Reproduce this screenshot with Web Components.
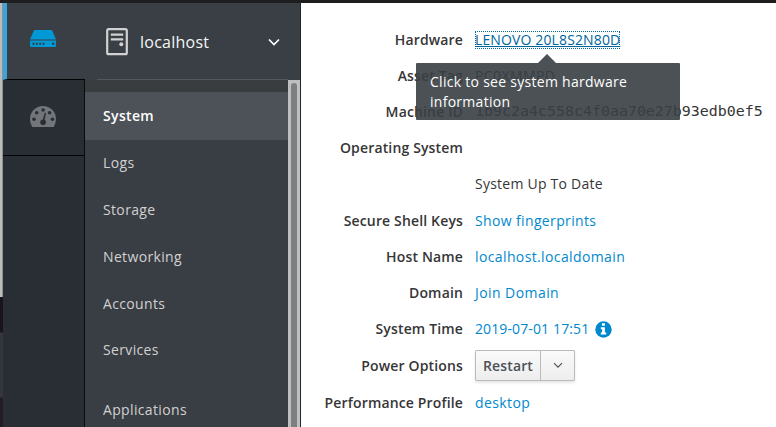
<!DOCTYPE html>
<html lang="en">
<head>
<meta charset="utf-8">
<title>System</title>
<style>
html, body { margin: 0; height: 100%; overflow: hidden; background: #fff; }
body { font: 14px/20px "Open Sans", sans-serif; color: #363636; }
</style>
</head>
<body>
<cockpit-shell></cockpit-shell>
<script>
const define = (name, html, init) => customElements.define(name, class extends HTMLElement {
  connectedCallback() {
    if (this.shadowRoot) return;
    const t = document.createElement('template');
    t.innerHTML = html;
    this.attachShadow({ mode: 'open' }).append(t.content.cloneNode(true));
    if (init) init(this);
  }
});

define('machine-rail', `
<style>
:host { display: flex; flex-direction: column; width: 81px; background: #292e34; border-right: 1px solid #0a0b0d; }
div { box-sizing: border-box; border-bottom: 1px solid #030303; display: flex; justify-content: center; align-items: center; }
.on { height: 77px; background: #393f44; border-left: 4px solid #39a5dc; margin-right: -1px; padding: 0 6px 6px 0; }
.off { height: 76px; padding: 0 1px 3px 0; }
svg { display: block; }
</style>
<div class="on"><svg width="26" height="18" viewBox="0 0 26 18"><path fill="#0099d6" d="M5 1h16q1 0 1.400 1L26 10.500H0L3.600 2Q4 1 5 1ZM0 11.500h26V17q0 .9-.9.900H.9Q0 17.900 0 17Z"/><path fill="#393f44" d="M2.500 13.700h2v2h-2zM5.800 13.700h2v2h-2zM9.200 13.700h2v2h-2zM12.600 13.700h2v2h-2zM22 13.700h2.400v2H22z"/></svg></div>
<div class="off"><svg width="26" height="21" viewBox="0 0 26 21"><path fill="#72767b" d="M2.200 21Q0 17.300 0 13a13 13 0 0 1 26 0q0 4.300-2.200 8Z"/><g fill="#292e34"><circle cx="4" cy="13.300" r="1.800"/><circle cx="6.700" cy="6.800" r="1.800"/><circle cx="13.100" cy="4" r="1.800"/><circle cx="19.600" cy="6.800" r="1.800"/><circle cx="22.500" cy="13.300" r="1.800"/><circle cx="13.100" cy="16.200" r="2.800"/><path d="m12.300 15.500 2.500-8.800 1.300.400-2 8.800Z"/></g></svg></div>`);

define('host-switcher', `
<style>
:host { display: flex; box-sizing: border-box; height: 77px; margin-left: 12px; padding: 1px 8px 0 9px; align-items: center; border-bottom: 1px solid #53585e; color: #f5f5f5; font-size: 16px; letter-spacing: .25px; width: 191px; }
span { flex: 1; margin-left: 12px; }
svg { display: block; }
</style>
<svg width="22" height="28" viewBox="0 0 22 28" fill="none" stroke="#d1d1d1"><rect x="1.200" y="1.200" width="19.600" height="25" rx="1.500" stroke-width="2.200"/><path stroke-width="2.200" d="M4.800 6.700h12.400M4.800 11.400h12.400"/><circle cx="15.300" cy="16.300" r="2" fill="#d1d1d1" stroke="none"/></svg>
<span><slot></slot></span>
<svg width="12" height="8" viewBox="0 0 12 8" fill="none" stroke="#fff" stroke-width="1.700"><path d="m1 1.500 5 5 5-5"/></svg>`);

define('nav-item', `
<style>
:host { display: flex; align-items: center; box-sizing: border-box; height: 46px; margin-bottom: 1px; padding-left: 18px; color: #d1d1d1; letter-spacing: .35px; }
:host([active]) { height: 48px; margin-bottom: 0; background: #4d5258; color: #fff; font-weight: 600; }
:host([tight]) { margin-bottom: 0; }
:host([spaced]) { margin-top: 14px; }
</style><slot></slot>`);

define('system-nav', `
<style>
:host { display: flex; flex-direction: column; width: 216px; box-sizing: border-box; background: #393d44; border-right: 1px solid #202730; }
.top { background: #393f44; }
.body { flex: 1; display: flex; min-height: 0; }
nav { flex: 1; padding-top: 12px; background: linear-gradient(#393d3f 0 12px, #393d44 12px); }
.bar { width: 12px; background: #bec0c0; display: flex; justify-content: center; padding-top: 3px; box-sizing: border-box; }
.thumb { width: 6px; border-radius: 3px 3px 0 0; background: #7c8081; }
</style>
<div class="top"><host-switcher>localhost</host-switcher></div>
<div class="body"><nav>
<nav-item active>System</nav-item><nav-item>Logs</nav-item><nav-item>Storage</nav-item><nav-item>Networking</nav-item><nav-item tight>Accounts</nav-item><nav-item tight>Services</nav-item><nav-item spaced>Applications</nav-item>
</nav><div class="bar"><div class="thumb"></div></div></div>`);

define('info-row', `
<style>
:host { display: grid; grid-template-columns: 162px 1fr; column-gap: 12px; align-items: center; height: 36px; white-space: nowrap; }
:host([gap]) { margin-bottom: 1px; }
b { font-weight: 600; text-align: right; letter-spacing: .15px; }
div { display: flex; align-items: center; letter-spacing: var(--track, 0); }
</style><b></b><div><slot></slot></div>`, el => el.shadowRoot.querySelector('b').textContent = el.getAttribute('label') || '');

define('text-link', `
<style>
:host { color: #0088ce; display: block; letter-spacing: var(--track, 0); }
:host([focused]) { color: #00659c; text-decoration: underline; outline: 1px dotted #00659c; outline-offset: -1px; line-height: 18px; }
</style><slot></slot>`);

define('mono-text', `<style>:host { display: block; margin-bottom: 2px; font: 14.950px/20px "DejaVu Sans Mono", monospace; }</style><slot></slot>`);

define('info-icon', `
<style>:host { display: block; margin-left: 6px; } svg { display: block; }</style>
<svg width="17" height="17" viewBox="0 0 17 17"><circle cx="8.500" cy="8.500" r="8.200" fill="#0088ce"/><path fill="#fff" d="M6.900 2.300h3v2.400h-3zM5.800 6.200h4.100v5.400h1.300v2H5.800v-2h1.300V8.200H5.800z"/></svg>`);

define('split-button', `
<style>
:host { display: flex; box-sizing: border-box; height: 31px; width: 100px; margin-bottom: 1px; border: 1px solid #bbb; border-radius: 1px; background: linear-gradient(#fafafa, #ededed); box-shadow: 0 2px 3px rgba(3,3,3,.1); color: #4d5258; font-weight: 600; letter-spacing: .12px; }
span { width: 64px; display: flex; align-items: center; justify-content: center; border-right: 1px solid #bbb; }
i { flex: 1; display: flex; align-items: center; justify-content: center; }
</style>
<span><slot></slot></span><i><svg width="10" height="7" viewBox="0 0 10 7" fill="none" stroke="#4d5258" stroke-width="1.200"><path d="m1 1.200 4 4 4-4"/></svg></i>`);

define('tool-tip', `
<style>
:host { position: absolute; left: 416px; top: 54px; width: 264px; opacity: .9; color: #fff; letter-spacing: .28px; }
.arrow { width: 18px; height: 9px; margin-left: 122px; background: #393f44; clip-path: polygon(50% 0, 100% 100%, 0 100%); }
.box { box-sizing: border-box; height: 57px; padding: 9px 14px; border-radius: 1px; background: #393f44; }
</style><div class="arrow"></div><div class="box"><slot></slot></div>`);

define('system-info', `
<style>:host { display: block; flex: 1; padding-top: 19px; }</style>
<info-row label="Hardware" style="--track:.13px"><text-link focused>LENOVO 20L8S2N80D</text-link></info-row>
<info-row label="Asset Tag" style="--track:.4px">PC0XMMPD</info-row>
<info-row label="Machine ID"><mono-text>1b9c2a4c558c4f0aa70e27b93edb0ef5</mono-text></info-row>
<info-row label="Operating System"></info-row>
<info-row gap style="--track:.24px">System Up To Date</info-row>
<info-row label="Secure Shell Keys" style="--track:.36px"><text-link>Show fingerprints</text-link></info-row>
<info-row label="Host Name" style="--track:.38px"><text-link>localhost.localdomain</text-link></info-row>
<info-row label="Domain" style="--track:.43px"><text-link>Join Domain</text-link></info-row>
<info-row gap label="System Time" style="--track:.12px"><text-link>2019-07-01 17:51</text-link><info-icon></info-icon></info-row>
<info-row gap label="Power Options"><split-button>Restart</split-button></info-row>
<info-row label="Performance Profile" style="--track:.4px"><text-link>desktop</text-link></info-row>
<tool-tip>Click to see system hardware<br>information</tool-tip>`);

define('cockpit-shell', `
<style>
:host { display: flex; flex-direction: column; width: 776px; height: 427px; }
header { height: 3px; background: #1d1d1d; }
main { flex: 1; display: flex; min-height: 0; }
.edge { width: 3px; background: linear-gradient(90deg, #bcbdbb 0 2px, #8d908f 2px) 0 0/3px 294px no-repeat, linear-gradient(#17151b 0 329px, #353541 330px 394px, #211c25 395px); }
</style>
<header></header>
<main><div class="edge"></div><machine-rail></machine-rail><system-nav></system-nav><system-info></system-info></main>`);
</script>
</body>
</html>
